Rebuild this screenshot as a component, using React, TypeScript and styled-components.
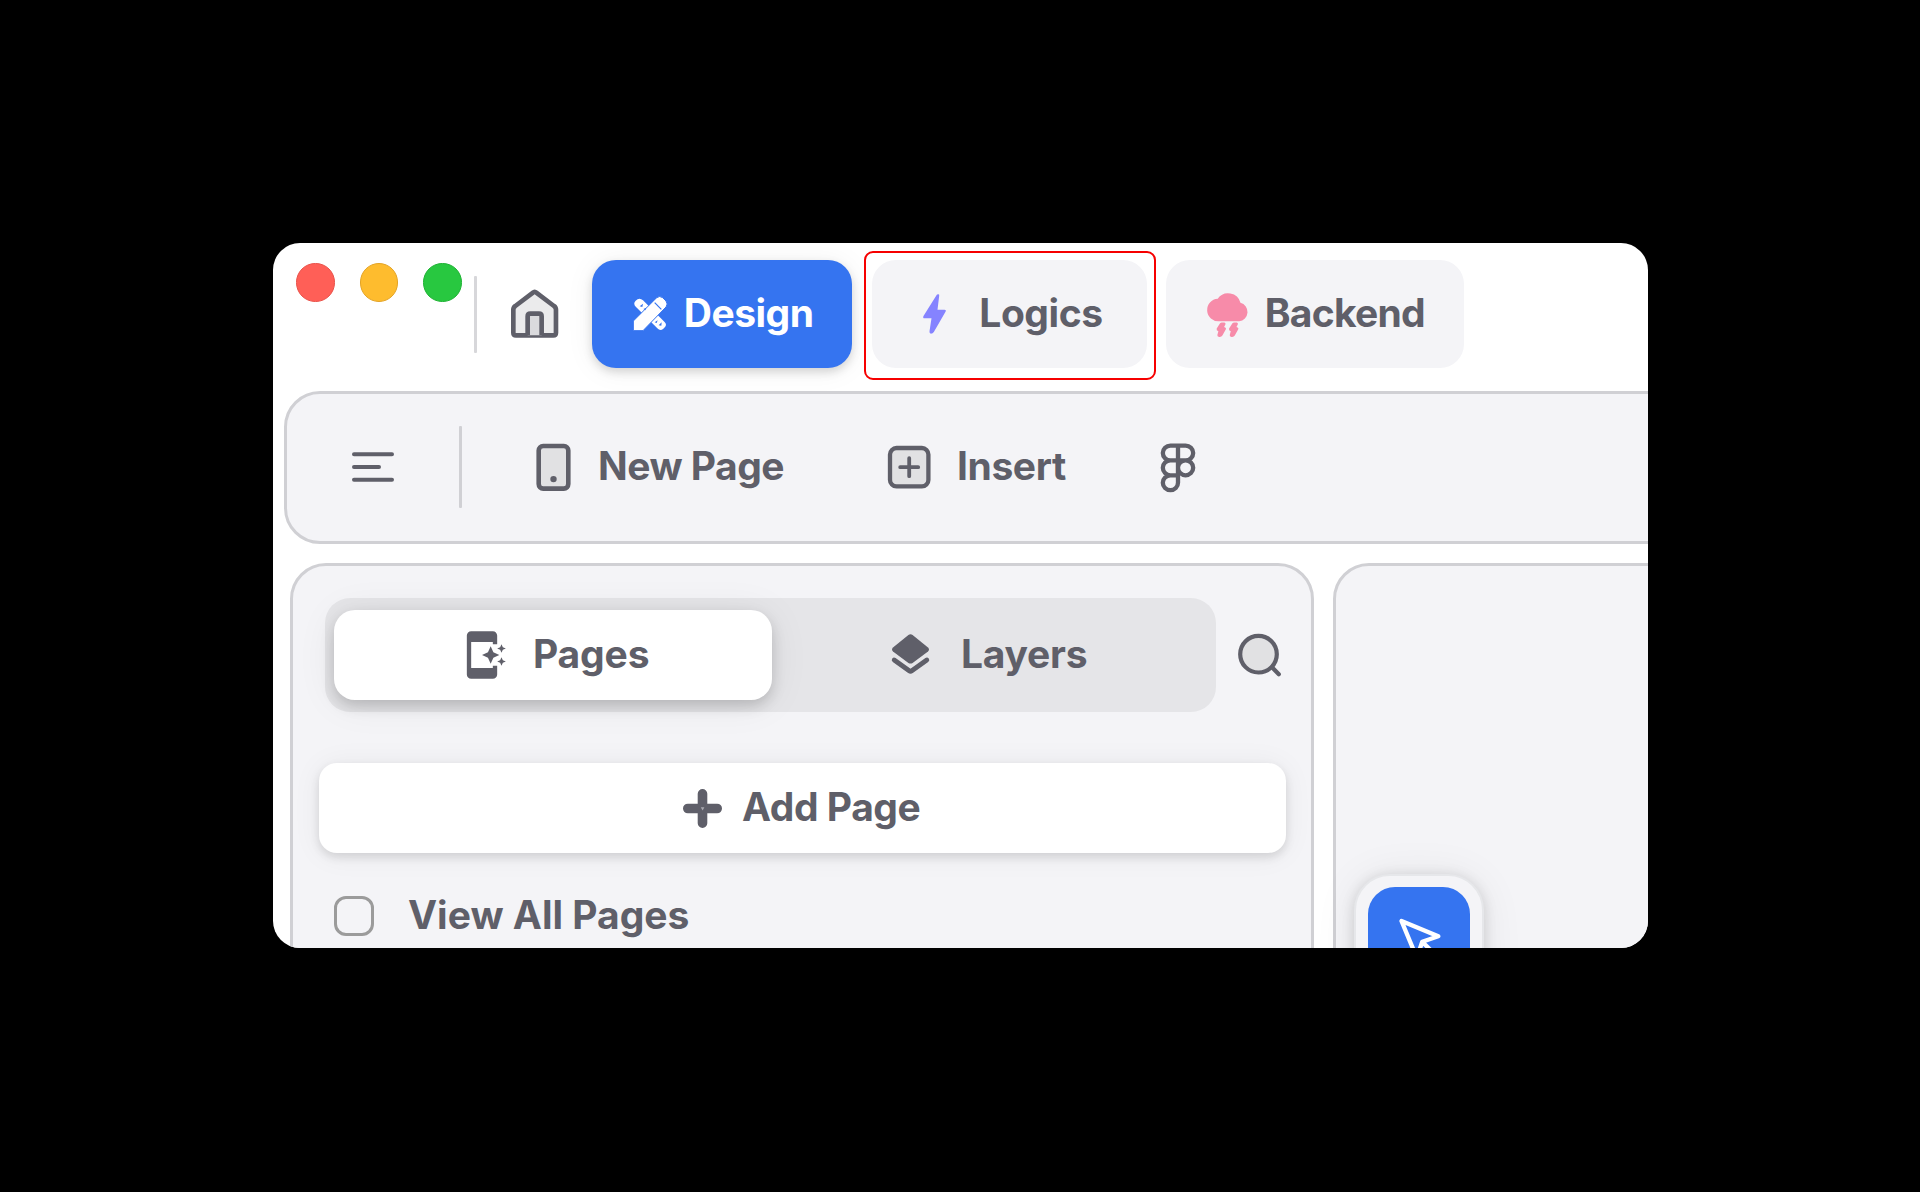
import React from "react";
import styled, { createGlobalStyle } from "styled-components";
import { MdAppShortcut } from "react-icons/md";

const ink = "#5f5f69";
const blue = "#3574f0";
const surface = "#f4f4f7";
const line = "#d0d0d4";

const GlobalStyle = createGlobalStyle`
  * { box-sizing: border-box; }
  body { margin: 0; background: #000; }
  svg { display: block; flex: none; overflow: visible; }
`;

const Stage = styled.main`
  width: 1920px;
  height: 1192px;
  padding: 243px 0 0 273px;
  background: #000;
  overflow: hidden;
  font-family: Inter, "Liberation Sans", sans-serif;
`;

const Window = styled.div`
  display: flex;
  flex-direction: column;
  width: 1375px;
  height: 705px;
  border-radius: 27px;
  background: #fff;
  overflow: hidden;
`;

const TopBar = styled.header`
  display: flex;
  align-items: flex-start;
  flex: none;
  height: 148px;
  padding-left: 23px;
`;

const Lights = styled.div`
  display: flex;
  gap: 25px;
  padding-top: 20px;
`;

const Light = styled.span<{ $fill: string; $rim: string }>`
  width: 38.5px;
  height: 38.5px;
  border-radius: 50%;
  background: ${(p) => p.$fill};
  border: 1px solid ${(p) => p.$rim};
`;

const Divider = styled.span<{ $height: number }>`
  flex: none;
  width: 3px;
  height: ${(p) => p.$height}px;
  border-radius: 1px;
  background: ${line};
`;

const TopDivider = styled(Divider)`
  margin: 33px 0 0 12px;
  background: #d7d7da;
`;

const HomeButton = styled.div`
  margin: 46px 34px 0 34px;
`;

const Label = styled.span<{ $spacing?: number }>`
  margin-bottom: 2px;
  font-size: 39px;
  line-height: 48px;
  font-weight: 680;
  letter-spacing: ${(p) => p.$spacing ?? 0}px;
  white-space: nowrap;
`;

const ModeButton = styled.div<{ $width: number; $inset: number; $gap: number; $active?: boolean }>`
  display: flex;
  align-items: center;
  flex: none;
  gap: ${(p) => p.$gap}px;
  width: ${(p) => p.$width}px;
  height: 108px;
  padding-left: ${(p) => p.$inset}px;
  border-radius: 24px;
  background: ${(p) => (p.$active ? blue : surface)};
  color: ${(p) => (p.$active ? "#fff" : ink)};
  box-shadow: ${(p) => (p.$active ? "0 4px 10px rgba(0,0,0,.15), 0 2px 30px rgba(0,0,0,.06)" : "none")};
`;

const ModeSlot = styled.div`
  margin-top: 17px;
`;

const Highlight = styled.div`
  margin: 8px 10px 0 12px;
  width: 292px;
  height: 129px;
  padding: 7px 6px;
  border: 2px solid #f60000;
  border-radius: 9px;
`;

const Toolbar = styled.div`
  display: flex;
  align-items: center;
  flex: none;
  width: 1500px;
  height: 153px;
  margin-left: 11px;
  padding: 0 0 1px 65px;
  border: 3px solid ${line};
  border-radius: 36px;
  background: ${surface};
  color: ${ink};
`;

const ToolbarItem = styled.div<{ $before: number; $gap?: number; $width?: number }>`
  display: flex;
  align-items: center;
  flex: none;
  gap: ${(p) => p.$gap ?? 0}px;
  margin-left: ${(p) => p.$before}px;
  width: ${(p) => (p.$width ? p.$width + "px" : "auto")};
`;

const Workspace = styled.div`
  display: flex;
  flex: none;
  gap: 19px;
  height: 500px;
  margin: 19px 0 0 17px;
`;

const SidePanel = styled.aside`
  flex: none;
  width: 1024px;
  padding: 32px 25px 0 26px;
  border: 3px solid ${line};
  border-radius: 36px;
  background: ${surface};
  color: ${ink};
`;

const SearchRow = styled.div`
  display: flex;
  align-items: center;
  padding-left: 6px;
  gap: 22px;
`;

const Tabs = styled.div`
  display: flex;
  align-items: center;
  flex: none;
  width: 891px;
  height: 114px;
  padding-left: 9px;
  border-radius: 25px;
  background: #e5e5e8;
`;

const Tab = styled.div<{ $width: number; $inset: number; $gap: number; $active?: boolean }>`
  display: flex;
  align-items: center;
  gap: ${(p) => p.$gap}px;
  width: ${(p) => p.$width}px;
  height: 90px;
  padding-left: ${(p) => p.$inset}px;
  border-radius: 21px;
  background: ${(p) => (p.$active ? "#fff" : "transparent")};
  box-shadow: ${(p) => (p.$active ? "0 6px 14px rgba(0,0,0,.17), 0 3px 40px rgba(0,0,0,.07)" : "none")};
`;

const AddPage = styled.div`
  display: flex;
  align-items: center;
  gap: 20px;
  width: 967px;
  height: 90px;
  margin-top: 51px;
  padding-left: 364px;
  border-radius: 18px;
  background: #fff;
  box-shadow: 0 4px 10px rgba(0,0,0,.12), 0 2px 30px rgba(0,0,0,.06);
`;

const ViewAll = styled.div`
  display: flex;
  align-items: center;
  gap: 34px;
  margin-top: 38px;
  padding-left: 15px;
`;

const Checkbox = styled.span`
  width: 40px;
  height: 40px;
  border: 3px solid #9b9b9b;
  border-radius: 12px;
`;

const Canvas = styled.section`
  flex: none;
  width: 600px;
  padding: 308px 0 0 18px;
  border: 3px solid ${line};
  border-radius: 36px;
  background: ${surface};
`;

const ToolPalette = styled.div`
  width: 130px;
  height: 300px;
  padding: 11px 12px;
  border: 2px solid #e6e7ea;
  border-radius: 36px;
  background: ${surface};
  box-shadow: 0 2px 14px rgba(0,0,0,.14), 0 2px 44px rgba(0,0,0,.07);
`;

const ActiveTool = styled.div`
  width: 102px;
  height: 102px;
  padding: 27px 0 0 27px;
  border-radius: 27px;
  background: ${blue};
`;

const HomeIcon = () => (
  <svg width="47.3" height="49" viewBox="0 0 142 147" stroke={ink} strokeWidth="14" strokeLinejoin="round">
    <path fill="#ebebec" d="M13 51Q7 55 7 62V131Q7 139 15 139H127Q135 139 135 131V62Q135 55 129 51L76 11Q71 6 66 11Z" />
    <path fill="#dadadd" d="M50 139V82Q50 74 58 74H84Q92 74 92 82V139" />
  </svg>
);

const DesignIcon = () => (
  <svg width="32" height="32" viewBox="0 0 96 96">
    <path fill="#fff" d="M5 8Q16-3 27 7L91 71Q101 80 91 89L88 92Q79 100 70 91L6 27Q-4 17 5 8Z" />
    <path fill="#fff" stroke={blue} strokeWidth="3" d="M-2 98V69L68-1Q77-8 86-1L96 9Q103 18 96 27L27 98Z" />
    <path fill="#fff" d="M0 96V71L70 2Q77-3 84 2L94 12Q99 18 94 25L25 96Z" />
    <path stroke={blue} strokeWidth="3.5" fill="none" d="M62 14L82 34" />
    <g fill={blue}>
      <path d="M17 25l10-8-2 10zM28 33l9-4-3 8zM62 73l9-6-3 8zM74 82l9-9-1 10z" />
    </g>
  </svg>
);

const BoltIcon = () => (
  <svg width="23" height="40" viewBox="0 0 68 120" fill="#8583ff">
    <path d="M39 5Q42 0 46 1Q49 2 48 6L43 47H64Q70 47 67 53L32 114Q29 119 23 119Q18 118 19 112L25 73H4Q-2 73 1 66Z" />
  </svg>
);

const StormIcon = () => (
  <svg width="40.5" height="45" viewBox="0 0 121 134" fill="#f78ba9">
    <path d="M33 87A33 33 0 0 1 29 20A38 38 0 0 1 97 32A28 28 0 0 1 93 87Z" />
    <path d="M36 93Q38 91 41 91H49Q54 92 52 97L48 104Q56 106 53 112L43 130Q40 135 33 134Q27 133 28 128L31 117Q24 115 26 109Z" />
    <path transform="translate(37 0)" d="M36 93Q38 91 41 91H49Q54 92 52 97L48 104Q56 106 53 112L43 130Q40 135 33 134Q27 133 28 128L31 117Q24 115 26 109Z" />
  </svg>
);

const MenuIcon = () => (
  <svg width="42" height="30" viewBox="0 0 42 30" stroke={ink} strokeWidth="4" strokeLinecap="round">
    <path d="M2 2.3H40M2 15H27M2 27.7H40" />
  </svg>
);

const PhoneIcon = () => (
  <svg width="34" height="47" viewBox="0 0 34 47">
    <rect x="2.7" y="2" width="29.6" height="42.6" rx="4.5" fill="#e1e1e3" stroke={ink} strokeWidth="4.6" />
    <circle cx="17.5" cy="35.1" r="3.2" fill={ink} />
  </svg>
);

const InsertIcon = () => (
  <svg width="43" height="43" viewBox="0 0 43 43" stroke={ink} strokeLinecap="round">
    <rect x="2" y="2" width="38.4" height="38.4" rx="6.5" fill="#e1e1e3" strokeWidth="4.3" />
    <path d="M21.2 12.2V30.2M12.2 21.2H30.2" strokeWidth="3.8" />
  </svg>
);

const FigmaIcon = () => (
  <svg width="52" height="51" viewBox="0 0 24 24" preserveAspectRatio="none" fill="none" stroke={ink} strokeWidth="2" strokeLinejoin="round">
    <path transform="translate(0 -.35)" d="M5 5.5A3.5 3.5 0 0 1 8.5 2H12v7H8.5A3.5 3.5 0 0 1 5 5.5zM12 2h3.5a3.5 3.5 0 1 1 0 7H12V2zM12 12.5a3.5 3.5 0 1 1 7 0 3.5 3.5 0 1 1-7 0zM5 19.5A3.5 3.5 0 0 1 8.5 16H12v3.5a3.5 3.5 0 1 1-7 0zM5 12.5A3.5 3.5 0 0 1 8.5 9H12v7H8.5A3.5 3.5 0 0 1 5 12.5z" />
  </svg>
);

const LayersIcon = () => (
  <svg width="37" height="40" viewBox="0 0 37 40" fill={ink}>
    <path d="M16.4 0Q18.5-1.6 20.6 0L36 12.4Q38 14.4 36 16.4L20.6 28Q18.5 29.2 16.4 28L1 16.4Q-1 14.4 1 12.4Z" />
    <path fill="none" stroke={ink} strokeWidth="4.8" strokeLinecap="round" strokeLinejoin="round" d="M2.2 25L17.2 35.8Q18.5 36.7 19.8 35.8L34.8 25" />
  </svg>
);

const SearchIcon = () => (
  <svg width="43" height="43" viewBox="0 0 43 43" stroke={ink} strokeWidth="4.2" strokeLinecap="round">
    <circle cx="20.5" cy="20.2" r="18.3" fill="#e1e1e3" />
    <path d="M34 33.2L40.8 40.2" />
  </svg>
);

const PlusIcon = () => (
  <svg width="39" height="39" viewBox="0 0 39 39">
    <path d="M19.5 4.8V34.2M4.8 19.5H34.2" stroke={ink} strokeWidth="9.6" strokeLinecap="round" />
    <path d="M17.8 18.3h3.6L19.6 21.4z" fill="#a9a9b0" />
  </svg>
);

const CursorIcon = () => (
  <svg width="52" height="53" viewBox="0 0 24 24" fill="none" stroke="#fff" strokeWidth="2" strokeLinecap="round" strokeLinejoin="round">
    <path d="M3 3l7.07 16.97 2.51-7.39 7.39-2.51L3 3zM13 13l6 6" />
  </svg>
);

export default function App() {
  return (
    <Stage>
      <GlobalStyle />
      <Window>
        <TopBar>
          <Lights>
            <Light $fill="#ff5f57" $rim="#e9524a" />
            <Light $fill="#febc2e" $rim="#e3a325" />
            <Light $fill="#28c840" $rim="#1fb234" />
          </Lights>
          <TopDivider $height={77} />
          <HomeButton>
            <HomeIcon />
          </HomeButton>
          <ModeSlot>
            <ModeButton $width={260} $inset={42} $gap={18} $active>
              <DesignIcon />
              <Label $spacing={-0.5}>Design</Label>
            </ModeButton>
          </ModeSlot>
          <Highlight>
            <ModeButton $width={275} $inset={51} $gap={33.5}>
              <BoltIcon />
              <Label $spacing={-0.45}>Logics</Label>
            </ModeButton>
          </Highlight>
          <ModeSlot>
            <ModeButton $width={298} $inset={42} $gap={16.5}>
              <StormIcon />
              <Label $spacing={-0.75}>Backend</Label>
            </ModeButton>
          </ModeSlot>
        </TopBar>
        <Toolbar>
          <MenuIcon />
          <ToolbarItem $before={65}>
            <Divider $height={82} />
          </ToolbarItem>
          <ToolbarItem $before={74} $gap={28} $width={352}>
            <PhoneIcon />
            <Label $spacing={-0.5}>New Page</Label>
          </ToolbarItem>
          <ToolbarItem $before={0} $gap={26} $width={264}>
            <InsertIcon />
            <Label $spacing={-0.4}>Insert</Label>
          </ToolbarItem>
          <ToolbarItem $before={0}>
            <FigmaIcon />
          </ToolbarItem>
        </Toolbar>
        <Workspace>
          <SidePanel>
            <SearchRow>
              <Tabs>
                <Tab $width={438} $inset={121.5} $gap={25.5} $active>
                  <MdAppShortcut size={52} color={ink} />
                  <Label $spacing={-0.15}>Pages</Label>
                </Tab>
                <Tab $width={440} $inset={119.5} $gap={32.5}>
                  <LayersIcon />
                  <Label $spacing={-0.25}>Layers</Label>
                </Tab>
              </Tabs>
              <SearchIcon />
            </SearchRow>
            <AddPage>
              <PlusIcon />
              <Label $spacing={-0.45}>Add Page</Label>
            </AddPage>
            <ViewAll>
              <Checkbox />
              <Label $spacing={0}>View All Pages</Label>
            </ViewAll>
          </SidePanel>
          <Canvas>
            <ToolPalette>
              <ActiveTool>
                <CursorIcon />
              </ActiveTool>
            </ToolPalette>
          </Canvas>
        </Workspace>
      </Window>
    </Stage>
  );
}
